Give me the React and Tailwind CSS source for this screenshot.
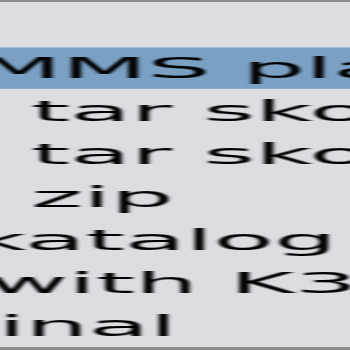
import React from "react";

const rows = [
  { text: "MMS player", ml: "ml-[-24px]", active: true },
  { text: "tar skomprimer", ml: "ml-[31px]" },
  { text: "tar skomprimer", ml: "ml-[31px]" },
  { text: "zip", ml: "ml-[31px]" },
  { text: "katalog", ml: "ml-[-31px]" },
  { text: "with K3b", ml: "ml-[-13px]" },
  { text: "Terminal", ml: "ml-[-243px]" },
];

export default function App() {
  return (
    <div
      className="w-[350px] h-[350px] overflow-hidden bg-[#dcdde1] border-t-2 border-b-[3px] border-[#8c8c8c] flex flex-col pt-[45px] text-black"
      style={{ fontFamily: '"DejaVu Sans", sans-serif' }}
    >
      {rows.map((r, i) => (
        <div
          key={i}
          className={
            r.active
              ? "h-[42px] mb-[1px] shrink-0 flex items-center bg-[#7aa0c4] border-t border-b border-t-[#a3bdd6] border-b-[#8fb0cd]"
              : "h-[43px] shrink-0 flex items-center"
          }
        >
          <span
            className={`${r.ml} shrink-0 whitespace-nowrap text-[28px] leading-[43px] origin-left scale-x-[3.55] blur-[0.6px]`}
          >
            {r.text}
          </span>
        </div>
      ))}
    </div>
  );
}
